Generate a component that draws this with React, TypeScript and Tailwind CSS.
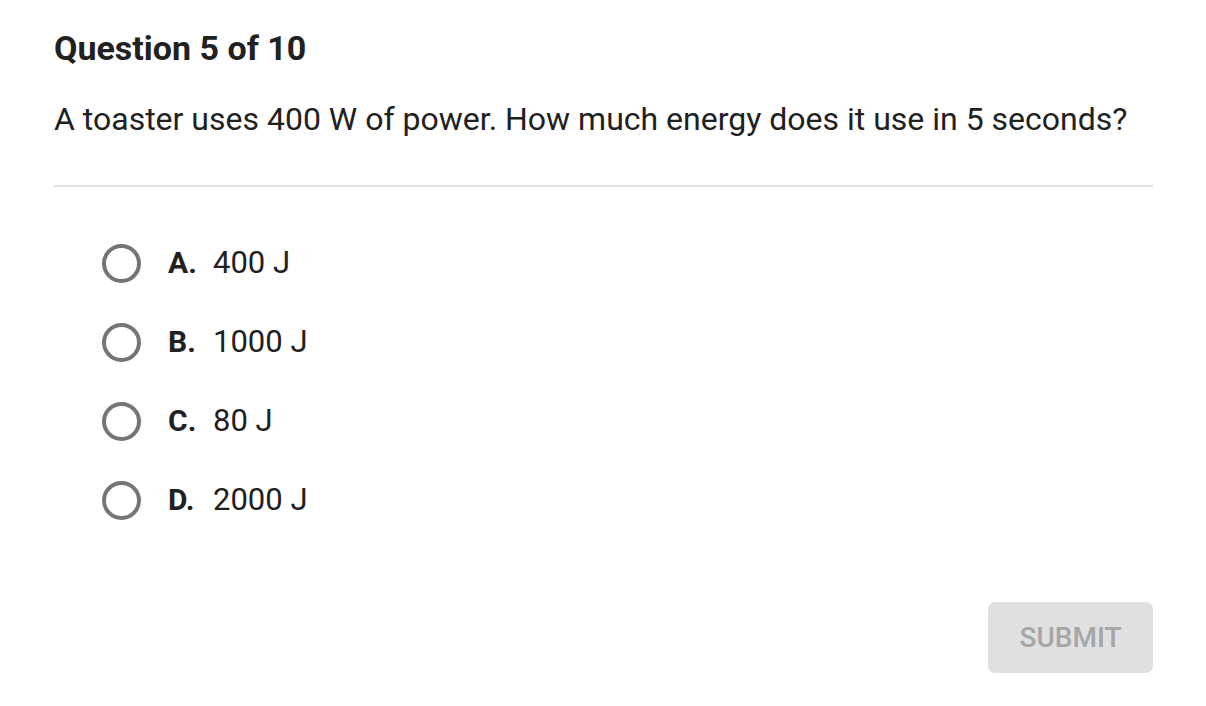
const options = [
  { key: 'A', text: '400 J' },
  { key: 'B', text: '1000 J' },
  { key: 'C', text: '80 J' },
  { key: 'D', text: '2000 J' },
];

export default function App() {
  return (
    <div className="min-h-[706px] bg-white px-[54px] pt-[26px] text-[#212121] [font-family:Roboto,'Liberation_Sans',sans-serif]">
      <h1 className="text-[34px] font-bold leading-[44px]">Question 5 of 10</h1>
      <p className="mt-[27px] text-[32px] leading-[44px]">
        A toaster uses 400 W of power. How much energy does it use in 5 seconds?
      </p>
      <div className="mt-[44px] h-[2px] w-[1099px] bg-[#e0e0e0]" />

      <ul className="mt-[56px] flex flex-col gap-[39px] pl-[48px]">
        {options.map((o) => (
          <li key={o.key} className="flex h-[40px] items-center">
            <span className="h-[39px] w-[39px] rounded-full border-[4px] border-[#757575]" />
            <span className="ml-[27px] w-[45px] text-[30px] font-bold leading-[40px]">{o.key}.</span>
            <span className="text-[31px] leading-[40px]">{o.text}</span>
          </li>
        ))}
      </ul>

      <div className="mt-[82px] flex w-[1099px] justify-end">
        <button className="h-[71px] w-[165px] rounded-[7px] bg-[#e0e0e0] text-[28px] font-medium text-[#a6a6a6]">
          SUBMIT
        </button>
      </div>
    </div>
  );
}
